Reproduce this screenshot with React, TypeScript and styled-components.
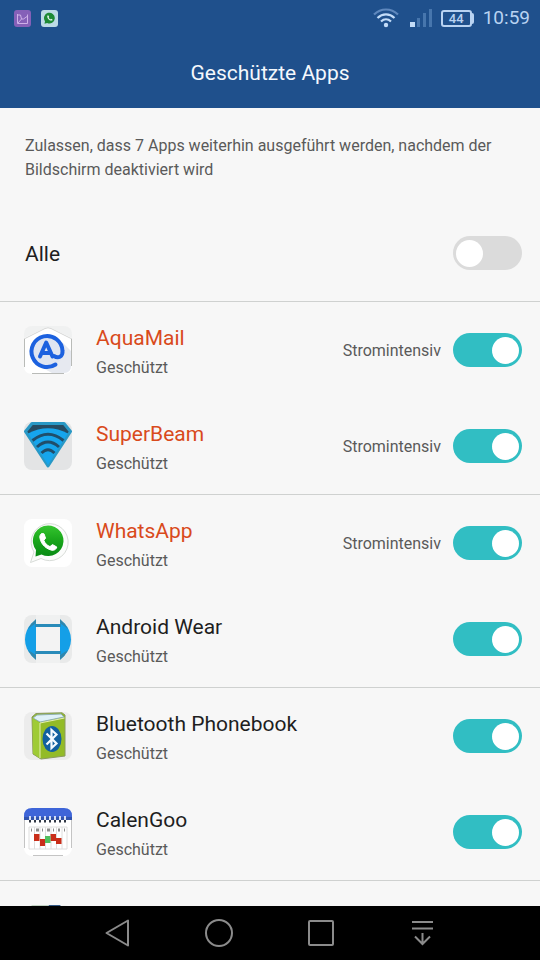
import React, { useState } from 'react';
import styled, { createGlobalStyle } from 'styled-components';

const GlobalStyle = createGlobalStyle`
  *, *::before, *::after { box-sizing: border-box; }
  body {
    margin: 0;
    background: #f7f7f7;
    font-family: Roboto, "Liberation Sans", sans-serif;
  }
`;

const Screen = styled.div`
  display: flex;
  flex-direction: column;
  height: 100vh;
  background: #f7f7f7;
`;

const Header = styled.header`
  flex: none;
  background: #1f508c;
`;

const StatusBar = styled.div`
  display: flex;
  align-items: center;
  justify-content: space-between;
  height: 36px;
  padding: 0 10px 0 14px;
  color: #b9d3f2;
`;

const StatusGroup = styled.div<{ $gap: number }>`
  display: flex;
  align-items: center;
  gap: ${(p) => p.$gap}px;
`;

const Battery = styled.div`
  display: flex;
  align-items: center;
`;

const BatteryBody = styled.span`
  width: 31px;
  height: 17px;
  border: 2px solid currentColor;
  border-radius: 3px;
  font-size: 13px;
  font-weight: 500;
  line-height: 14px;
  text-align: center;
`;

const BatteryTip = styled.span`
  width: 2px;
  height: 11px;
  border-radius: 0 2px 2px 0;
  background: currentColor;
`;

const Clock = styled.time`
  font-size: 19px;
  line-height: 36px;
`;

const Title = styled.h1`
  margin: 0;
  padding-top: 2px;
  color: #f4f8fd;
  font-size: 21px;
  font-weight: 400;
  line-height: 70px;
  text-align: center;
`;

const Content = styled.main`
  flex: 1;
  min-height: 0;
  overflow: hidden;
`;

const Intro = styled.p`
  margin: 0;
  padding: 26px 24px 23px 25px;
  color: #5a5a5a;
  font-size: 16px;
  line-height: 24px;
`;

const Row = styled.label<{ $divider?: boolean }>`
  display: flex;
  align-items: center;
  height: ${(p) => (p.$divider ? '97px' : '96px')};
  padding: 0 18px 0 24px;
  border-bottom: ${(p) => (p.$divider ? '1px solid #cfd1d0' : '0')};
`;

const RowTitle = styled.span`
  flex: 1;
  padding: 2px 0 0 1px;
  color: #1e1e1e;
  font-size: 21px;
  line-height: 28px;
`;

const AppText = styled.span`
  display: flex;
  flex: 1;
  flex-direction: column;
  min-width: 0;
  padding: 6px 0 0 24px;
`;

const AppName = styled.span<{ $intensive: boolean }>`
  color: ${(p) => (p.$intensive ? '#d94a1c' : '#1e1e1e')};
  font-size: 21px;
  line-height: 28px;
`;

const Secondary = styled.span`
  padding-top: 2px;
  color: #5a5a5a;
  font-size: 16px;
  line-height: 28px;
`;

const Switch = styled.input`
  appearance: none;
  display: flex;
  flex: none;
  align-items: center;
  justify-content: flex-start;
  width: 69px;
  height: 34px;
  margin: 0 0 0 12px;
  padding: 0 3px;
  border-radius: 17px;
  background: #dbdbdb;
  cursor: pointer;

  &::before {
    content: '';
    width: 27px;
    height: 27px;
    border-radius: 50%;
    background: #fff;
  }

  &:checked {
    justify-content: flex-end;
    background: #31bec3;
  }
`;

const AppIcon = styled.svg`
  flex: none;
  width: 48px;
  height: 48px;
`;

const NavBar = styled.nav`
  display: grid;
  flex: none;
  grid-template-columns: repeat(4, 1fr);
  height: 54px;
  padding: 0 12.5%;
  background: #000;
`;

const NavButton = styled.button`
  display: flex;
  align-items: center;
  justify-content: center;
  padding: 0;
  border: 0;
  background: none;
  color: #8b8b8b;
`;

const GalleryStatusIcon = () => (
  <svg width="17" height="17" viewBox="0 0 17 17" aria-hidden="true">
    <rect width="17" height="17" rx="3" fill="#8560b8" />
    <path d="M3.500 4V13.500H13.500V4.500M4 5H6.500L7.500 9L4 13M13 6.500L9.500 9L7.500 9" fill="none" stroke="#cdb0e8" strokeWidth="1" />
  </svg>
);

const phonePath =
  'M17.600 14.500C16 15.500 15.500 17.500 16 19.500C17.500 26 22.500 30 28 31.300C30.500 31.600 32.500 30 32.800 28L28.500 25.600L26 27.600C23 26.400 20.800 24.200 19.800 21.200L21.600 19.300L20 14.800Z';

const ChatStatusIcon = () => (
  <svg width="17" height="17" viewBox="0 0 17 17" aria-hidden="true">
    <rect width="17" height="17" rx="3" fill="#bddbe6" />
    <path d="M3.500 13.800L4 11.200A5.400 5.400 0 1 1 6.200 13Z" fill="#1d8a35" />
    <path d="M6.400 5.500C5.500 8 8.500 11.300 11.300 10.500L11.500 9.500L10 8.800L9.200 9.400L7.600 7.700L8.200 6.900L7.500 5.400Z" fill="#e4f6ee" />
  </svg>
);

const WifiIcon = () => (
  <svg width="28" height="20" viewBox="0 0 28 20" fill="none" strokeWidth="2.200" aria-hidden="true">
    <path d="M1 6.500C8-.2 18-.2 25 6.500" stroke="#5f88bd" />
    <path d="M4.500 10C9.500 5.200 16.500 5.200 21.500 10" stroke="#c3dcf8" />
    <path d="M8 13.500C11 10.700 15 10.700 18 13.500" stroke="#c3dcf8" />
    <circle cx="13" cy="17" r="2.200" fill="#c3dcf8" />
  </svg>
);

const SignalIcon = () => (
  <svg width="22" height="18" viewBox="0 0 22 18" aria-hidden="true">
    <rect x="0" y="13" width="5" height="5" fill="#c3dcf8" />
    <path d="M7 9H10V18H7ZM13 4H16V18H13ZM19 0H22V18H19Z" fill="#4776ad" />
  </svg>
);

const AquaMailIcon = () => (
  <AppIcon viewBox="0 0 48 48" aria-hidden="true">
    <rect width="48" height="48" rx="8" fill="#f0f1f1" />
    <path d="M0 12L21 2Q24 .5 27 2L48 12V40Q48 48 40 48H8Q0 48 0 40Z" fill="#fff" />
    <path d="M0 13L21 2.500Q24 1 27 2.500L48 13" fill="none" stroke="#d5d6d5" />
    <path d="M.5 13V41M47.500 13V40M8 47.500H40" fill="none" stroke="#b9bbb8" />
    <path d="M38 16L47 25V40Q47 47 40 47H28L15 40Z" fill="#e6e9f0" />
    <circle cx="23" cy="25" r="16" fill="#dfe5f1" />
    <path d="M31.500 38.500A15.500 15.500 0 1 1 38.500 25C39 31 34 32.500 30 30" fill="none" stroke="#1c61df" strokeWidth="4" strokeLinecap="round" />
    <path d="M16 30.500L22.200 16.500L28.500 30.500M19 27H26" fill="none" stroke="#1c61df" strokeWidth="4" strokeLinecap="round" strokeLinejoin="round" />
  </AppIcon>
);

const SuperBeamIcon = () => (
  <AppIcon viewBox="0 0 48 48" aria-hidden="true">
    <rect width="48" height="48" rx="8" fill="#e3e4e5" />
    <path d="M8 1.500H40L46.500 9.500L24 44L1.500 9.500Z" fill="#264c63" stroke="#2998c5" strokeWidth="3" strokeLinejoin="round" />
    <path d="M4 11.500Q24 1 44 11.500L24 43Z" fill="#16a5ed" />
    <g fill="none" stroke="#204e6b" strokeWidth="3">
      <path d="M8.500 18.500Q24 6 39.500 18.500" />
      <path d="M13 25Q24 15 35 25" />
      <path d="M17.500 31Q24 24.500 30.500 31" />
    </g>
  </AppIcon>
);

const WhatsAppIcon = () => (
  <AppIcon viewBox="0 0 48 48" aria-hidden="true">
    <rect width="48" height="48" rx="8" fill="#fff" />
    <defs>
      <linearGradient id="chatGreen" x1="0" y1="0" x2="0" y2="1">
        <stop offset="0" stopColor="#35c52f" />
        <stop offset=".5" stopColor="#18a51a" />
        <stop offset="1" stopColor="#078a14" />
      </linearGradient>
    </defs>
    <path d="M6.500 43.500L10 33A18.500 18.500 0 1 1 17 39.500Z" fill="#fbfcfb" stroke="#d8dcd8" />
    <path d="M11.500 37.500L12 31A15.300 15.300 0 1 1 17.500 35.500Z" fill="url(#chatGreen)" />
    <path d={phonePath} fill="#fff" stroke="#fff" strokeLinejoin="round" />
  </AppIcon>
);

const WearIcon = () => (
  <AppIcon viewBox="0 0 48 48" aria-hidden="true">
    <rect width="48" height="48" rx="8" fill="#e9eaea" />
    <circle cx="24" cy="24.500" r="23" fill="#149fe7" />
    <path d="M12 0H36V48H12Z" fill="#f0f1f1" />
    <path d="M12 4V8L4 14Q7 8 12 4ZM36 4V8L44 14Q41 8 36 4ZM12 45V40L4 35Q7 41 12 45ZM36 45V40L44 35Q41 41 36 45Z" fill="#3187ad" />
    <path d="M11 9H37V12H11ZM11 36H37V39H11Z" fill="#298bb9" />
    <rect x="12" y="12" width="24" height="24" fill="#f3f3f3" />
  </AppIcon>
);

const PhonebookIcon = () => (
  <AppIcon viewBox="0 0 48 48" aria-hidden="true">
    <rect width="48" height="48" rx="8" fill="#ececec" />
    <path d="M8 5L12 1.500L38 .8L41 3V44L17 47L9 42Z" fill="#93bb27" stroke="#8a9a5e" strokeWidth="1" strokeLinejoin="round" />
    <path d="M9 6L13 3L37 2L40 5L16 10Z" fill="#dff1f8" stroke="#8fb0b5" />
    <path d="M8.500 6L16 11V46.500L9 41.500Z" fill="#9fcb36" />
    <path d="M16 11V46M16 11L40.500 6" fill="none" stroke="#e5eeb5" />
    <ellipse cx="28" cy="27" rx="9.500" ry="13" fill="#12609f" />
    <path d="M22.500 21.500L32.500 31.500L27.500 36V18L32.500 22.500L22.500 32.500" fill="none" stroke="#f5fbff" strokeWidth="2.200" />
  </AppIcon>
);

const CalendarIcon = () => (
  <AppIcon viewBox="0 0 48 48" aria-hidden="true">
    <rect width="48" height="48" rx="8" fill="#fff" />
    <path d="M0 12V8Q0 0 8 0H40Q48 0 48 8V12Z" fill="#3e65d8" />
    <path d="M0 9H48V12H0Z" fill="#3153ad" />
    <path d="M5 13H45" stroke="#303745" strokeWidth="3" strokeDasharray="2 3" />
    <path d="M5 10H45" stroke="#d5def3" strokeWidth="4" strokeDasharray="2 3" />
    <path d="M5 19V41M10.500 19V41M16 19V41M21.500 19V41M27 19V41M32.500 19V41M38 19V41M43 19V41M5 19H43M5 41H43" stroke="#dedede" fill="none" />
    <path d="M7 22H8M12 22H15M18 22H19M23 22H26M29 22H30M34 22H36M40 22H41" stroke="#8c8c8c" strokeWidth="3" />
    <path d="M10 26H15.500V33H10ZM16 31H21V38H16ZM26.500 26H32V33H26.500ZM32 30H37.500V36H32Z" fill="#c92e1a" />
    <path d="M21 28H26.500V35H21Z" fill="#51bf60" />
    <path d="M.5 12V40M47.500 12V40M9 47.500H39" fill="none" stroke="#c4c4c4" />
  </AppIcon>
);

const ShieldIcon = () => (
  <AppIcon viewBox="0 0 48 48" aria-hidden="true">
    <rect width="48" height="48" rx="8" fill="#eff1f0" />
    <path d="M8 0H25L18 5H4Z" fill="#c3d3c3" />
    <path d="M25 0H36L40 5H22Z" fill="#315783" />
  </AppIcon>
);

interface ProtectedApp {
  name: string;
  intensive: boolean;
  icon: React.ComponentType;
}

const apps: ProtectedApp[] = [
  { name: 'AquaMail', intensive: true, icon: AquaMailIcon },
  { name: 'SuperBeam', intensive: true, icon: SuperBeamIcon },
  { name: 'WhatsApp', intensive: true, icon: WhatsAppIcon },
  { name: 'Android Wear', intensive: false, icon: WearIcon },
  { name: 'Bluetooth Phonebook', intensive: false, icon: PhonebookIcon },
  { name: 'CalenGoo', intensive: false, icon: CalendarIcon },
];

function AppRow({ app, divider }: { app: ProtectedApp; divider: boolean }) {
  const [checked, setChecked] = useState(true);
  const Icon = app.icon;
  return (
    <Row $divider={divider}>
      <Icon />
      <AppText>
        <AppName $intensive={app.intensive}>{app.name}</AppName>
        <Secondary>Geschützt</Secondary>
      </AppText>
      {app.intensive && <Secondary>Stromintensiv</Secondary>}
      <Switch type="checkbox" checked={checked} onChange={(e) => setChecked(e.target.checked)} />
    </Row>
  );
}

export default function App() {
  return (
    <>
      <GlobalStyle />
      <Screen>
        <Header>
          <StatusBar>
            <StatusGroup $gap={10}>
              <GalleryStatusIcon />
              <ChatStatusIcon />
            </StatusGroup>
            <StatusGroup $gap={9}>
              <WifiIcon />
              <SignalIcon />
              <Battery>
                <BatteryBody>44</BatteryBody>
                <BatteryTip />
              </Battery>
              <Clock>10:59</Clock>
            </StatusGroup>
          </StatusBar>
          <Title>Geschützte Apps</Title>
        </Header>
        <Content>
          <Intro>
            Zulassen, dass 7 Apps weiterhin ausgeführt werden, nachdem der Bildschirm deaktiviert wird
          </Intro>
          <Row $divider>
            <RowTitle>Alle</RowTitle>
            <Switch type="checkbox" />
          </Row>
          {apps.map((app, index) => (
            <AppRow key={app.name} app={app} divider={index % 2 === 1} />
          ))}
          <Row as="div">
            <ShieldIcon />
          </Row>
        </Content>
        <NavBar>
          <NavButton type="button" aria-label="Zurück">
            <svg width="28" height="30" viewBox="0 0 28 30" fill="none" stroke="currentColor" strokeWidth="2" strokeLinejoin="round">
              <path d="M2.500 15L24 2.500V27.500Z" />
            </svg>
          </NavButton>
          <NavButton type="button" aria-label="Startbildschirm">
            <svg width="30" height="30" viewBox="0 0 30 30" fill="none" stroke="currentColor" strokeWidth="2">
              <circle cx="15" cy="15" r="13" />
            </svg>
          </NavButton>
          <NavButton type="button" aria-label="Letzte Apps">
            <svg width="28" height="28" viewBox="0 0 28 28" fill="none" stroke="currentColor" strokeWidth="2">
              <rect x="2" y="2" width="24" height="24" rx="1" />
            </svg>
          </NavButton>
          <NavButton type="button" aria-label="Benachrichtigungen">
            <svg width="24" height="28" viewBox="0 0 24 28" fill="none" stroke="currentColor" strokeWidth="2">
              <path d="M2 3H23M2 9.500H23M12.500 14V25M5 17.500L12.500 25L20 17.500" />
            </svg>
          </NavButton>
        </NavBar>
      </Screen>
    </>
  );
}
